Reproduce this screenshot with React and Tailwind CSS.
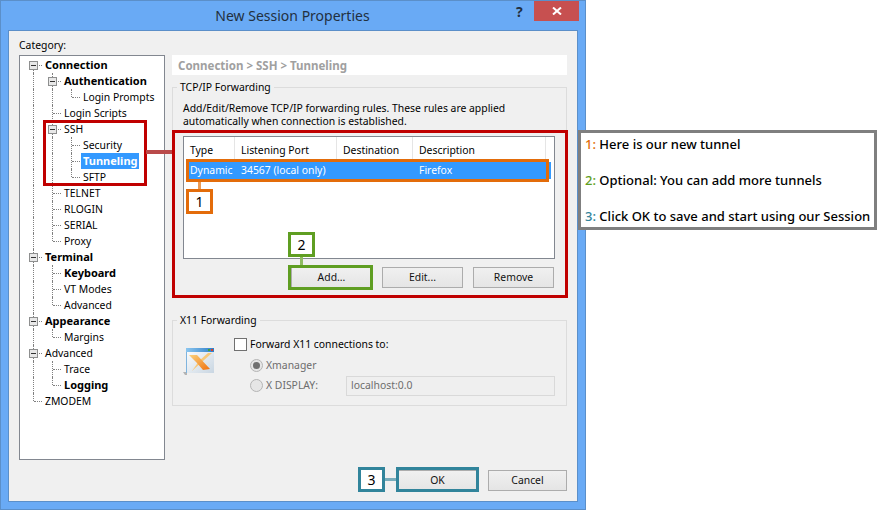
const treeItems = [
  { label: "Connection", bold: true, guides: ["box"] },
  { label: "Authentication", bold: true, guides: ["pipe", "box"] },
  { label: "Login Prompts", guides: ["pipe", "pipe", "end"] },
  { label: "Login Scripts", guides: ["pipe", "tee"] },
  { label: "SSH", guides: ["pipe", "box"] },
  { label: "Security", guides: ["pipe", "pipe", "tee"] },
  { label: "Tunneling", bold: true, selected: true, guides: ["pipe", "pipe", "tee"] },
  { label: "SFTP", guides: ["pipe", "pipe", "end"] },
  { label: "TELNET", guides: ["pipe", "tee"] },
  { label: "RLOGIN", guides: ["pipe", "tee"] },
  { label: "SERIAL", guides: ["pipe", "tee"] },
  { label: "Proxy", guides: ["pipe", "end"] },
  { label: "Terminal", bold: true, guides: ["box"] },
  { label: "Keyboard", bold: true, guides: ["pipe", "tee"] },
  { label: "VT Modes", guides: ["pipe", "tee"] },
  { label: "Advanced", guides: ["pipe", "end"] },
  { label: "Appearance", bold: true, guides: ["box"] },
  { label: "Margins", guides: ["pipe", "end"] },
  { label: "Advanced", guides: ["box"] },
  { label: "Trace", guides: ["pipe", "tee"] },
  { label: "Logging", bold: true, guides: ["pipe", "end"] },
  { label: "ZMODEM", guides: ["end"] },
];

const columns = [
  ["Type", "w-[51px]"],
  ["Listening Port", "w-[102px]"],
  ["Destination", "w-[76px]"],
  ["Description", "w-[133px]"],
];

const Guide = ({ type, first }) => (
  <div className="relative h-4 w-[19px] shrink-0">
    {(type === "pipe" || type === "tee") && (
      <div className="absolute left-[9px] top-0 h-4 border-l border-dotted border-[#808080]" />
    )}
    {type === "end" && <div className="absolute left-[9px] top-0 h-2 border-l border-dotted border-[#808080]" />}
    {type === "box" && !first && <div className="absolute left-[9px] top-0 h-4 border-l border-dotted border-[#808080]" />}
    {type === "box" && first && <div className="absolute left-[9px] top-2 h-2 border-l border-dotted border-[#808080]" />}
    {type !== "pipe" && <div className="absolute left-[10px] top-2 w-2 border-t border-dotted border-[#808080]" />}
    {type === "box" && (
      <div className="absolute left-[5px] top-1 flex h-[9px] w-[9px] items-center justify-center border border-[#8e8f8f] bg-[#e8e8e8]">
        <div className="h-px w-[5px] bg-[#333]" />
      </div>
    )}
  </div>
);

const TreeRow = ({ item, index }) => (
  <div className="flex h-4 items-center">
    {item.guides.map((g, i) => (
      <Guide key={i} type={g} first={index === 0} />
    ))}
    <span
      className={`whitespace-nowrap px-0.5 leading-[16px] ${item.bold ? "text-[11px] font-bold" : ""} ${
        item.selected ? "bg-[#3399ff] text-white" : "text-black"
      }`}
    >
      {item.label}
    </span>
  </div>
);

const DialogButton = ({ label, small }) => (
  <button
    className={`h-[21px] border border-[#acacac] bg-gradient-to-b from-[#f0f0f0] to-[#e5e5e5] text-[#111] ${
      small ? "w-[79px]" : "w-[81px]"
    }`}
  >
    {label}
  </button>
);

const XmanagerIcon = () => (
  <svg width="32" height="30" viewBox="0 0 32 30">
    <defs>
      <linearGradient id="body" x1="0" y1="0" x2="1" y2="1">
        <stop offset="0" stopColor="#ffffff" />
        <stop offset="1" stopColor="#c9d6e2" />
      </linearGradient>
      <linearGradient id="bar" x1="0" y1="0" x2="1" y2="0">
        <stop offset="0" stopColor="#8cc6ef" />
        <stop offset="1" stopColor="#2f7fc8" />
      </linearGradient>
      <linearGradient id="arm" x1="0" y1="0" x2="1" y2="1">
        <stop offset="0" stopColor="#fbd27c" />
        <stop offset="1" stopColor="#f0710f" />
      </linearGradient>
    </defs>
    <path d="M0 25h4v3h-2z" fill="#b4b4b4" />
    <rect x="3" y="1" width="28" height="25" fill="url(#body)" />
    <rect x="3" y="1" width="1" height="25" fill="#7fb4de" />
    <rect x="3" y="1" width="28" height="4" fill="url(#bar)" />
    <rect x="25" y="2" width="2" height="2" fill="#3fa03f" />
    <rect x="28" y="2" width="2" height="2" fill="#d8402a" />
    <path d="M29 6l-9 8-11 10 7-10 9-8z" fill="#f7c878" />
    <path d="M6 8h8l13 14-7 1-6-7z" fill="url(#arm)" />
  </svg>
);

const Radio = ({ checked }) => (
  <span className="flex h-[13px] w-[13px] shrink-0 items-center justify-center rounded-full border border-[#b5b5b5] bg-[#e6e6e6]">
    {checked && <span className="h-[7px] w-[7px] rounded-full bg-[#707070]" />}
  </span>
);

const Badge = ({ text, className }) => (
  <div className={`absolute flex items-center justify-center border-[3px] bg-white text-[14px] text-black ${className}`}>
    {text}
  </div>
);

const App = () => {
  return (
    <div className="relative h-[510px] w-[879px] overflow-hidden bg-white font-['Noto_Sans',sans-serif] text-[10.4px] text-black">
      {/* fenetre */}
      <div className="flex h-[510px] w-[586px] flex-col border border-[#5b8fc9] bg-[#69aaf5]">
        <div className="relative flex h-[29px] shrink-0 items-center justify-center pr-px text-[14px] text-[#22303f]">
          New Session Properties
          <span className="absolute left-[515px] top-0 text-[14px] font-bold leading-[22px]">?</span>
          <div className="absolute left-[533px] top-0 flex h-5 w-[45px] items-center justify-center bg-[#c75050]">
            <svg width="10" height="8" viewBox="0 0 10 8">
              <path d="M1 0.5l8 7M9 0.5l-8 7" stroke="#fff" strokeWidth="2" fill="none" />
            </svg>
          </div>
        </div>
        <div className="mx-[7px] mb-[7px] flex min-h-0 flex-1 flex-col border border-[#5b8fc9] bg-[#f0f0f0] px-[10px] pb-[10px] pt-[7px]">
          <div className="h-[17px] leading-[14px]">Category:</div>
          <div className="flex min-h-0 flex-1 gap-[7px]">
            <div className="h-[405px] w-[146px] shrink-0 border border-[#828790] bg-white pl-1 pt-[1px]">
              {treeItems.map((item, i) => (
                <TreeRow key={i} item={item} index={i} />
              ))}
            </div>
            <div className="flex flex-1 flex-col">
              <div className="flex h-5 shrink-0 items-center bg-white px-1.5 pt-px text-[11.5px] font-bold text-[#a0a0a0]">
                Connection &gt; SSH &gt; Tunneling
              </div>
              <fieldset className="mt-[6px] h-[216px] shrink-0 border border-[#dcdcdc]">
                <legend className="ml-[4px] px-[3px] leading-[13px]">TCP/IP Forwarding</legend>
                <div className="px-[10px]">
                  <p className="mt-[8px] whitespace-nowrap leading-[13px]">
                    Add/Edit/Remove TCP/IP forwarding rules. These rules are applied
                    <br />
                    automatically when connection is established.
                  </p>
                  <div className="mt-[8px] h-[123px] w-[372px] border border-[#828790] bg-white">
                    <div className="flex h-[25px] items-center">
                      {columns.map(([title, w]) => (
                        <div key={title} className={`${w} h-[25px] border-r border-[#e5e5e5] pl-[6px] leading-[26px]`}>
                          {title}
                        </div>
                      ))}
                    </div>
                    <div className="mx-[3px] flex h-[17px] items-center whitespace-nowrap bg-[#3399ff] leading-[17px] text-white">
                      <div className="w-[48px] pl-[3px]">Dynamic</div>
                      <div className="w-[102px] pl-[6px]">34567 (local only)</div>
                      <div className="w-[76px]" />
                      <div className="pl-[6px]">Firefox</div>
                    </div>
                  </div>
                  <div className="mt-[8px] flex w-[371px] justify-end gap-[10px]">
                    <DialogButton label="Add..." />
                    <DialogButton label="Edit..." />
                    <DialogButton label="Remove" />
                  </div>
                </div>
              </fieldset>
              <fieldset className="mt-[17px] h-[92px] shrink-0 border border-[#dcdcdc]">
                <legend className="ml-[4px] px-[3px] leading-[13px]">X11 Forwarding</legend>
                <div className="flex pl-[10px] pt-[11px]">
                  <div className="mt-[9px] w-[51px] shrink-0">
                    <XmanagerIcon />
                  </div>
                  <div>
                    <div className="flex items-center gap-[3px] leading-[13px]">
                      <span className="h-[13px] w-[13px] border border-[#707070] bg-white" />
                      Forward X11 connections to:
                    </div>
                    <div className="ml-4 mt-[7px] flex items-center gap-[3px] text-[#6d6d6d]">
                      <Radio checked />
                      Xmanager
                    </div>
                    <div className="ml-4 mt-[2px] flex items-center gap-[3px] text-[#6d6d6d]">
                      <Radio />
                      <span className="w-[77px]">X DISPLAY:</span>
                      <div className="flex h-5 w-[209px] items-center border border-[#d9d9d9] bg-[#efefef] px-[4px]">
                        localhost:0.0
                      </div>
                    </div>
                  </div>
                </div>
              </fieldset>
              <div className="mt-auto flex justify-end gap-[11px]">
                <DialogButton label="OK" small />
                <DialogButton label="Cancel" small />
              </div>
            </div>
          </div>
        </div>
      </div>

      {/* annotations */}
      <div className="absolute left-[43px] top-[120px] h-[66px] w-[104px] border-[3px] border-[#c00000]" />
      <div className="absolute left-[146px] top-[150px] h-1 w-[27px] bg-[#b94a4a]" />
      <div className="absolute left-[172px] top-[130px] h-[168px] w-[396px] border-[3px] border-[#c00000]" />
      <div className="absolute left-[186px] top-[159px] h-[23px] w-[363px] border-[3px] border-[#e36c0a]" />
      <div className="absolute left-[198px] top-[182px] h-[7px] w-[3px] bg-[#eb9a55]" />
      <Badge text="1" className="left-[186px] top-[189px] h-[25px] w-[27px] border-[#e36c0a]" />
      <Badge text="2" className="left-[288px] top-[232px] h-[25px] w-[27px] border-[#5f9e22]" />
      <div className="absolute left-[300px] top-[257px] h-2 w-[3px] bg-[#8fbb62]" />
      <div className="absolute left-[288px] top-[265px] h-[25px] w-[85px] border-[3px] border-[#5f9e22]" />
      <Badge text="3" className="left-[358px] top-[467px] h-[25px] w-[27px] border-[#31849b]" />
      <div className="absolute left-[385px] top-[478px] h-[3px] w-[12px] bg-[#78acbb]" />
      <div className="absolute left-[396px] top-[467px] h-[25px] w-[83px] border-[3px] border-[#31849b]" />

      {/* legende */}
      <div className="absolute left-[578px] top-[130px] h-[100px] w-[299px] border-[3px] border-[#7f7f7f] bg-white pl-[4px] pt-[2px] text-[13px] font-medium leading-[18px]">
        <p>
          <span className="text-[#e36c0a]">1:</span> Here is our new tunnel
        </p>
        <p className="mt-[18px]">
          <span className="text-[#5f9e22]">2:</span> Optional: You can add more tunnels
        </p>
        <p className="mt-[18px]">
          <span className="text-[#31849b]">3:</span> Click OK to save and start using our Session
        </p>
      </div>
    </div>
  );
};

export default App;
